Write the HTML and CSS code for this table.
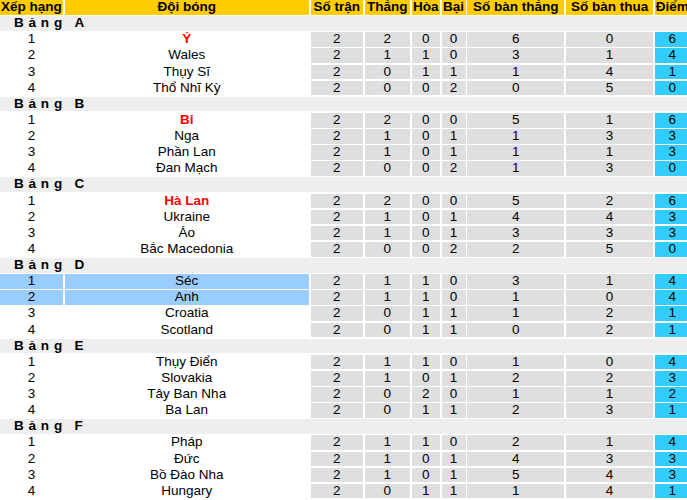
FILE: index.html
```html
<!DOCTYPE html>
<html lang="vi">
<head>
<meta charset="utf-8">
<title>Bảng xếp hạng</title>
<link rel="stylesheet" href="styles.css">
</head>
<body>
<div class="standings">
  <div class="row head">
    <div>Xếp hạng</div><div>Đội bóng</div><div>Số trận</div><div>Thắng</div><div>Hòa</div><div>Bại</div><div>Số bàn thắng</div><div>Số bàn thua</div><div>Điểm</div>
  </div>

  <div class="row group"><span class="g-word">Bảng</span><span class="g-letter">A</span></div>
  <div class="row"><div class="rank">1</div><div class="team win">Ý</div><div class="num">2</div><div class="num">2</div><div class="num">0</div><div class="num">0</div><div class="num">6</div><div class="num">0</div><div class="pts">6</div></div>
  <div class="row"><div class="rank">2</div><div class="team">Wales</div><div class="num">2</div><div class="num">1</div><div class="num">1</div><div class="num">0</div><div class="num">3</div><div class="num">1</div><div class="pts">4</div></div>
  <div class="row"><div class="rank">3</div><div class="team">Thụy Sĩ</div><div class="num">2</div><div class="num">0</div><div class="num">1</div><div class="num">1</div><div class="num">1</div><div class="num">4</div><div class="pts">1</div></div>
  <div class="row"><div class="rank">4</div><div class="team">Thổ Nhĩ Kỳ</div><div class="num">2</div><div class="num">0</div><div class="num">0</div><div class="num">2</div><div class="num">0</div><div class="num">5</div><div class="pts">0</div></div>

  <div class="row group"><span class="g-word">Bảng</span><span class="g-letter">B</span></div>
  <div class="row"><div class="rank">1</div><div class="team win">Bỉ</div><div class="num">2</div><div class="num">2</div><div class="num">0</div><div class="num">0</div><div class="num">5</div><div class="num">1</div><div class="pts">6</div></div>
  <div class="row"><div class="rank">2</div><div class="team">Nga</div><div class="num">2</div><div class="num">1</div><div class="num">0</div><div class="num">1</div><div class="num">1</div><div class="num">3</div><div class="pts">3</div></div>
  <div class="row"><div class="rank">3</div><div class="team">Phần Lan</div><div class="num">2</div><div class="num">1</div><div class="num">0</div><div class="num">1</div><div class="num">1</div><div class="num">1</div><div class="pts">3</div></div>
  <div class="row"><div class="rank">4</div><div class="team">Đan Mạch</div><div class="num">2</div><div class="num">0</div><div class="num">0</div><div class="num">2</div><div class="num">1</div><div class="num">3</div><div class="pts">0</div></div>

  <div class="row group"><span class="g-word">Bảng</span><span class="g-letter">C</span></div>
  <div class="row"><div class="rank">1</div><div class="team win">Hà Lan</div><div class="num">2</div><div class="num">2</div><div class="num">0</div><div class="num">0</div><div class="num">5</div><div class="num">2</div><div class="pts">6</div></div>
  <div class="row"><div class="rank">2</div><div class="team">Ukraine</div><div class="num">2</div><div class="num">1</div><div class="num">0</div><div class="num">1</div><div class="num">4</div><div class="num">4</div><div class="pts">3</div></div>
  <div class="row"><div class="rank">3</div><div class="team">Áo</div><div class="num">2</div><div class="num">1</div><div class="num">0</div><div class="num">1</div><div class="num">3</div><div class="num">3</div><div class="pts">3</div></div>
  <div class="row"><div class="rank">4</div><div class="team">Bắc Macedonia</div><div class="num">2</div><div class="num">0</div><div class="num">0</div><div class="num">2</div><div class="num">2</div><div class="num">5</div><div class="pts">0</div></div>

  <div class="row group"><span class="g-word">Bảng</span><span class="g-letter">D</span></div>
  <div class="row hl"><div class="rank">1</div><div class="team">Séc</div><div class="num">2</div><div class="num">1</div><div class="num">1</div><div class="num">0</div><div class="num">3</div><div class="num">1</div><div class="pts">4</div></div>
  <div class="row hl"><div class="rank">2</div><div class="team">Anh</div><div class="num">2</div><div class="num">1</div><div class="num">1</div><div class="num">0</div><div class="num">1</div><div class="num">0</div><div class="pts">4</div></div>
  <div class="row"><div class="rank">3</div><div class="team">Croatia</div><div class="num">2</div><div class="num">0</div><div class="num">1</div><div class="num">1</div><div class="num">1</div><div class="num">2</div><div class="pts">1</div></div>
  <div class="row"><div class="rank">4</div><div class="team">Scotland</div><div class="num">2</div><div class="num">0</div><div class="num">1</div><div class="num">1</div><div class="num">0</div><div class="num">2</div><div class="pts">1</div></div>

  <div class="row group"><span class="g-word">Bảng</span><span class="g-letter">E</span></div>
  <div class="row"><div class="rank">1</div><div class="team">Thụy Điển</div><div class="num">2</div><div class="num">1</div><div class="num">1</div><div class="num">0</div><div class="num">1</div><div class="num">0</div><div class="pts">4</div></div>
  <div class="row"><div class="rank">2</div><div class="team">Slovakia</div><div class="num">2</div><div class="num">1</div><div class="num">0</div><div class="num">1</div><div class="num">2</div><div class="num">2</div><div class="pts">3</div></div>
  <div class="row"><div class="rank">3</div><div class="team">Tây Ban Nha</div><div class="num">2</div><div class="num">0</div><div class="num">2</div><div class="num">0</div><div class="num">1</div><div class="num">1</div><div class="pts">2</div></div>
  <div class="row"><div class="rank">4</div><div class="team">Ba Lan</div><div class="num">2</div><div class="num">0</div><div class="num">1</div><div class="num">1</div><div class="num">2</div><div class="num">3</div><div class="pts">1</div></div>

  <div class="row group"><span class="g-word">Bảng</span><span class="g-letter">F</span></div>
  <div class="row"><div class="rank">1</div><div class="team">Pháp</div><div class="num">2</div><div class="num">1</div><div class="num">1</div><div class="num">0</div><div class="num">2</div><div class="num">1</div><div class="pts">4</div></div>
  <div class="row"><div class="rank">2</div><div class="team">Đức</div><div class="num">2</div><div class="num">1</div><div class="num">0</div><div class="num">1</div><div class="num">4</div><div class="num">3</div><div class="pts">3</div></div>
  <div class="row"><div class="rank">3</div><div class="team">Bồ Đào Nha</div><div class="num">2</div><div class="num">1</div><div class="num">0</div><div class="num">1</div><div class="num">5</div><div class="num">4</div><div class="pts">3</div></div>
  <div class="row"><div class="rank">4</div><div class="team">Hungary</div><div class="num">2</div><div class="num">0</div><div class="num">1</div><div class="num">1</div><div class="num">1</div><div class="num">4</div><div class="pts">1</div></div>
</div>
</body>
</html>
```

FILE: styles.css
```css
html, body {
  margin: 0;
  padding: 0;
  background: #ffffff;
  overflow: hidden;
}

body {
  width: 687px;
  height: 500px;
  font-family: "Liberation Sans", Arial, sans-serif;
  font-size: 13.5px;
  color: #000;
}

.standings {
  display: flex;
  flex-direction: column;
  row-gap: 1.5px;
  width: 700px;
}

.row {
  display: grid;
  grid-template-columns: 63px 244.5px 52.5px 45.5px 28.5px 24px 97.3px 87.5px 35px;
  column-gap: 1.5px;
  height: 14.63px;
  line-height: 14.63px;
  text-align: center;
  white-space: nowrap;
}

.row > div {
  overflow: hidden;
}

.head > div {
  background: #ffcc00;
  font-weight: bold;
}

.group {
  display: flex;
  align-items: center;
  background: #eeeeee;
  font-weight: bold;
  text-align: left;
}

.g-word {
  padding-left: 14px;
  letter-spacing: 4.8px;
}

.g-letter {
  margin-left: 6px;
}

.rank,
.team {
  background: #ffffff;
}

.num {
  background: #dfdfdf;
}

.pts {
  background: #33ccff;
}

.win {
  color: #ff0000;
  font-weight: bold;
}

.hl .rank,
.hl .team {
  background: #99ccff;
}
```
